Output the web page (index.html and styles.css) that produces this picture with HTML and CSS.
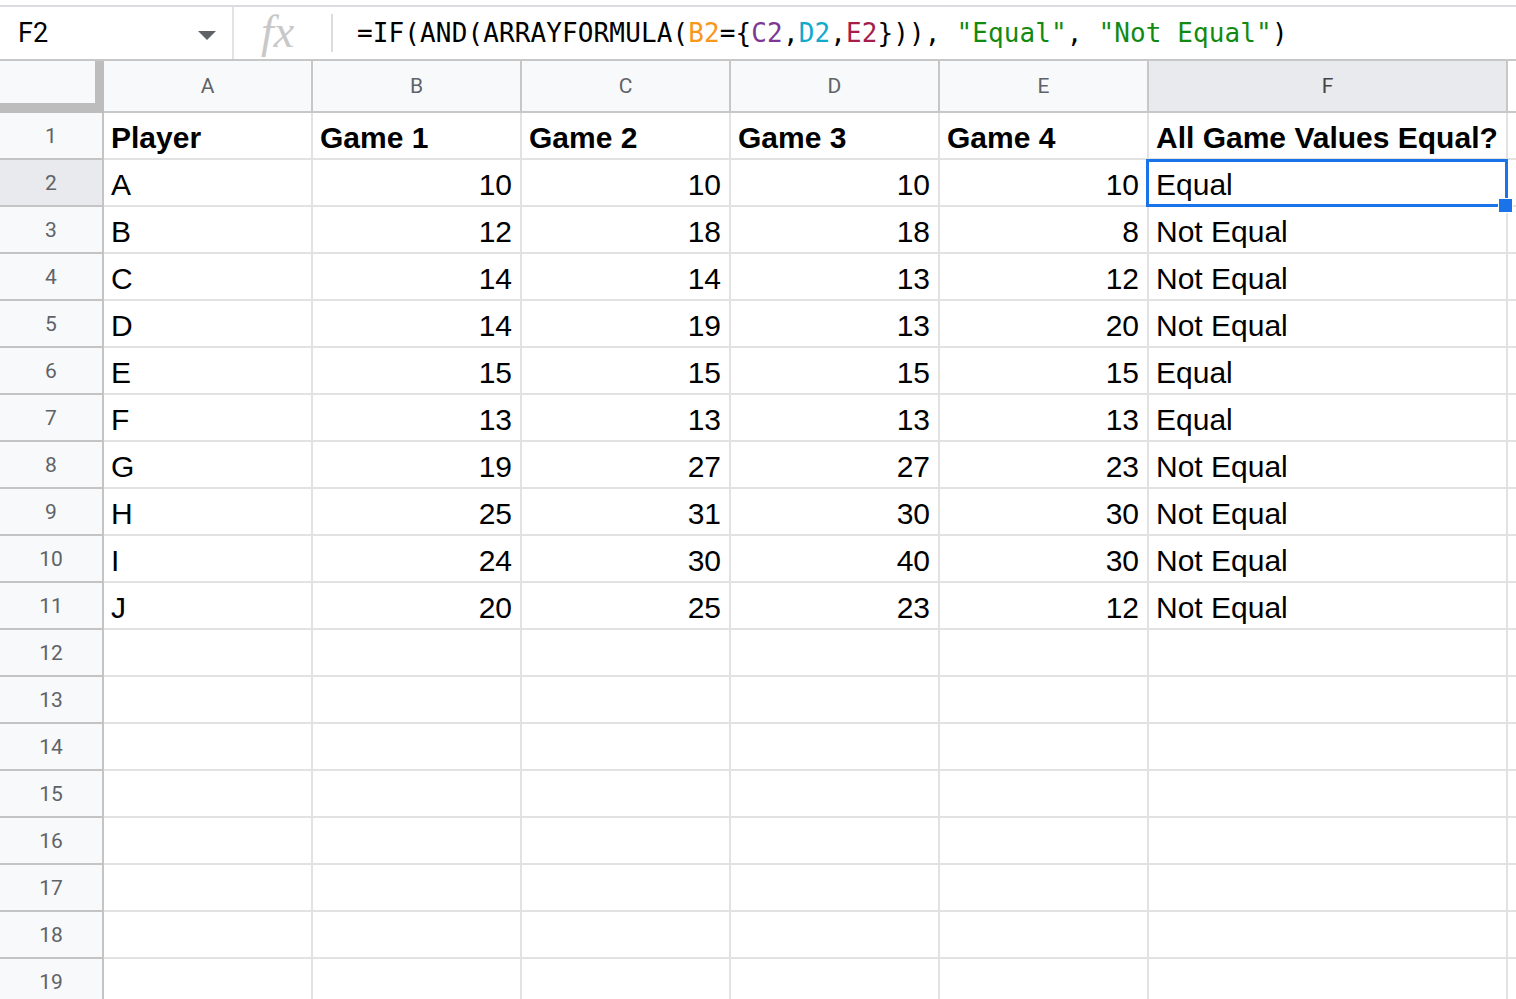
FILE: index.html
```html
<!DOCTYPE html>
<html>

<head>
    <title>All Game Values Equal</title>
    <link rel="stylesheet" href="styles.css">
</head>

<body>
    <div class="formula-bar">
        <div class="name-box">
            <span class="cell-ref">F2</span>
            <svg class="caret" width="18" height="9" viewBox="0 0 18 9"><path d="M0 0h18L9 9z" fill="#5f6368"/></svg>
        </div>
        <div class="fx">fx</div>
        <div class="formula">=IF(AND(ARRAYFORMULA(<span class="r1">B2</span>={<span class="r2">C2</span>,<span class="r3">D2</span>,<span class="r4">E2</span>})), <span class="str">"Equal"</span>, <span class="str">"Not Equal"</span>)</div>
    </div>

    <div class="sheet">
        <div class="corner"></div>
        <div class="col-head">A</div>
        <div class="col-head">B</div>
        <div class="col-head">C</div>
        <div class="col-head">D</div>
        <div class="col-head">E</div>
        <div class="col-head active">F</div>
        <div class="col-head filler"></div>

        <div class="row-head">1</div>
        <div class="cell bold">Player</div>
        <div class="cell bold">Game 1</div>
        <div class="cell bold">Game 2</div>
        <div class="cell bold">Game 3</div>
        <div class="cell bold">Game 4</div>
        <div class="cell bold">All Game Values Equal?</div>
        <div class="cell filler"></div>

        <div class="row-head active">2</div>
        <div class="cell">A</div>
        <div class="cell num">10</div>
        <div class="cell num">10</div>
        <div class="cell num">10</div>
        <div class="cell num">10</div>
        <div class="cell selected">Equal<span class="sel-box"></span><span class="handle"></span></div>
        <div class="cell filler"></div>

        <div class="row-head">3</div>
        <div class="cell">B</div>
        <div class="cell num">12</div>
        <div class="cell num">18</div>
        <div class="cell num">18</div>
        <div class="cell num">8</div>
        <div class="cell">Not Equal</div>
        <div class="cell filler"></div>

        <div class="row-head">4</div>
        <div class="cell">C</div>
        <div class="cell num">14</div>
        <div class="cell num">14</div>
        <div class="cell num">13</div>
        <div class="cell num">12</div>
        <div class="cell">Not Equal</div>
        <div class="cell filler"></div>

        <div class="row-head">5</div>
        <div class="cell">D</div>
        <div class="cell num">14</div>
        <div class="cell num">19</div>
        <div class="cell num">13</div>
        <div class="cell num">20</div>
        <div class="cell">Not Equal</div>
        <div class="cell filler"></div>

        <div class="row-head">6</div>
        <div class="cell">E</div>
        <div class="cell num">15</div>
        <div class="cell num">15</div>
        <div class="cell num">15</div>
        <div class="cell num">15</div>
        <div class="cell">Equal</div>
        <div class="cell filler"></div>

        <div class="row-head">7</div>
        <div class="cell">F</div>
        <div class="cell num">13</div>
        <div class="cell num">13</div>
        <div class="cell num">13</div>
        <div class="cell num">13</div>
        <div class="cell">Equal</div>
        <div class="cell filler"></div>

        <div class="row-head">8</div>
        <div class="cell">G</div>
        <div class="cell num">19</div>
        <div class="cell num">27</div>
        <div class="cell num">27</div>
        <div class="cell num">23</div>
        <div class="cell">Not Equal</div>
        <div class="cell filler"></div>

        <div class="row-head">9</div>
        <div class="cell">H</div>
        <div class="cell num">25</div>
        <div class="cell num">31</div>
        <div class="cell num">30</div>
        <div class="cell num">30</div>
        <div class="cell">Not Equal</div>
        <div class="cell filler"></div>

        <div class="row-head">10</div>
        <div class="cell">I</div>
        <div class="cell num">24</div>
        <div class="cell num">30</div>
        <div class="cell num">40</div>
        <div class="cell num">30</div>
        <div class="cell">Not Equal</div>
        <div class="cell filler"></div>

        <div class="row-head">11</div>
        <div class="cell">J</div>
        <div class="cell num">20</div>
        <div class="cell num">25</div>
        <div class="cell num">23</div>
        <div class="cell num">12</div>
        <div class="cell">Not Equal</div>
        <div class="cell filler"></div>

        <div class="row-head">12</div>
        <div class="cell"></div><div class="cell"></div><div class="cell"></div><div class="cell"></div><div class="cell"></div><div class="cell"></div><div class="cell filler"></div>
        <div class="row-head">13</div>
        <div class="cell"></div><div class="cell"></div><div class="cell"></div><div class="cell"></div><div class="cell"></div><div class="cell"></div><div class="cell filler"></div>
        <div class="row-head">14</div>
        <div class="cell"></div><div class="cell"></div><div class="cell"></div><div class="cell"></div><div class="cell"></div><div class="cell"></div><div class="cell filler"></div>
        <div class="row-head">15</div>
        <div class="cell"></div><div class="cell"></div><div class="cell"></div><div class="cell"></div><div class="cell"></div><div class="cell"></div><div class="cell filler"></div>
        <div class="row-head">16</div>
        <div class="cell"></div><div class="cell"></div><div class="cell"></div><div class="cell"></div><div class="cell"></div><div class="cell"></div><div class="cell filler"></div>
        <div class="row-head">17</div>
        <div class="cell"></div><div class="cell"></div><div class="cell"></div><div class="cell"></div><div class="cell"></div><div class="cell"></div><div class="cell filler"></div>
        <div class="row-head">18</div>
        <div class="cell"></div><div class="cell"></div><div class="cell"></div><div class="cell"></div><div class="cell"></div><div class="cell"></div><div class="cell filler"></div>
        <div class="row-head">19</div>
        <div class="cell"></div><div class="cell"></div><div class="cell"></div><div class="cell"></div><div class="cell"></div><div class="cell"></div><div class="cell filler"></div>
    </div>
</body>

</html>
```

FILE: styles.css
```css
body {
    margin: 0;
    background-color: #fff;
    font-family: "Liberation Sans", Arial, sans-serif;
    overflow: hidden;
    height: 999px;
}

/* formula bar */

.formula-bar {
    display: flex;
    align-items: stretch;
    height: 52px;
    margin-top: 5px;
    border-top: 2px solid #dadce0;
    border-bottom: 2px solid #c7c7c7;
}

.name-box {
    width: 234px;
    display: flex;
    align-items: center;
    justify-content: space-between;
    padding: 0 16px 0 18px;
    box-sizing: border-box;
    border-right: 2px solid #e3e3e3;
}

.cell-ref {
    font-family: Roboto, sans-serif;
    font-size: 27px;
    color: #000;
}

.caret {
    margin-top: 4px;
}

.fx {
    width: 99px;
    padding-left: 27px;
    box-sizing: border-box;
    font-family: "Liberation Serif", serif;
    font-style: italic;
    font-size: 46px;
    line-height: 50px;
    color: #c8c8c8;
    position: relative;
}

.fx::after {
    content: "";
    position: absolute;
    right: 0;
    top: 7px;
    bottom: 7px;
    width: 2px;
    background-color: #dadce0;
}

.formula {
    padding-left: 24px;
    font-family: "DejaVu Sans Mono", monospace;
    font-size: 26px;
    letter-spacing: 0.12px;
    line-height: 52px;
    color: #000;
    white-space: pre;
}

.r1 { color: #f7981d; }
.r2 { color: #7e3794; }
.r3 { color: #11a9cc; }
.r4 { color: #a61d4c; }
.str { color: #128a12; }

/* grid */

.sheet {
    display: grid;
    grid-template-columns: 104px repeat(5, 209px) 359px 1fr;
    grid-template-rows: 52px;
    grid-auto-rows: 47px;
}

.corner {
    background-color: #f8f9fa;
    border-right: 9px solid #bdbdbd;
    border-bottom: 10px solid #bdbdbd;
}

.col-head {
    background-color: #f8f9fa;
    border-right: 2px solid #c7c7c7;
    border-bottom: 2px solid #c7c7c7;
    font-family: Roboto, sans-serif;
    font-size: 21px;
    color: #5f6368;
    display: flex;
    align-items: center;
    justify-content: center;
}

.col-head.active {
    background-color: #e8eaed;
    color: #444;
}

.col-head.filler {
    background-color: #fff;
    border-right: none;
}

.row-head {
    background-color: #f8f9fa;
    border-right: 2px solid #c4c4c4;
    border-bottom: 2px solid #c4c4c4;
    font-family: Roboto, sans-serif;
    font-size: 21px;
    color: #5f6368;
    display: flex;
    align-items: center;
    justify-content: center;
}

.row-head.active {
    background-color: #e8eaed;
}

.cell {
    position: relative;
    border-right: 2px solid #e2e2e2;
    border-bottom: 2px solid #e2e2e2;
    font-size: 30px;
    color: #000;
    display: flex;
    align-items: flex-end;
    padding: 0 8px 3px 7px;
    white-space: nowrap;
}

.cell.bold {
    font-weight: bold;
}

.cell.num {
    justify-content: flex-end;
}

.cell.filler {
    border-right: none;
}

.sel-box {
    position: absolute;
    top: -1px;
    left: -3px;
    right: -2px;
    bottom: -2px;
    border: 3px solid #1a73e8;
}

.handle {
    position: absolute;
    right: -7px;
    bottom: -8px;
    width: 13px;
    height: 13px;
    background-color: #1a73e8;
    border: 1px solid #fff;
    z-index: 2;
}
```
